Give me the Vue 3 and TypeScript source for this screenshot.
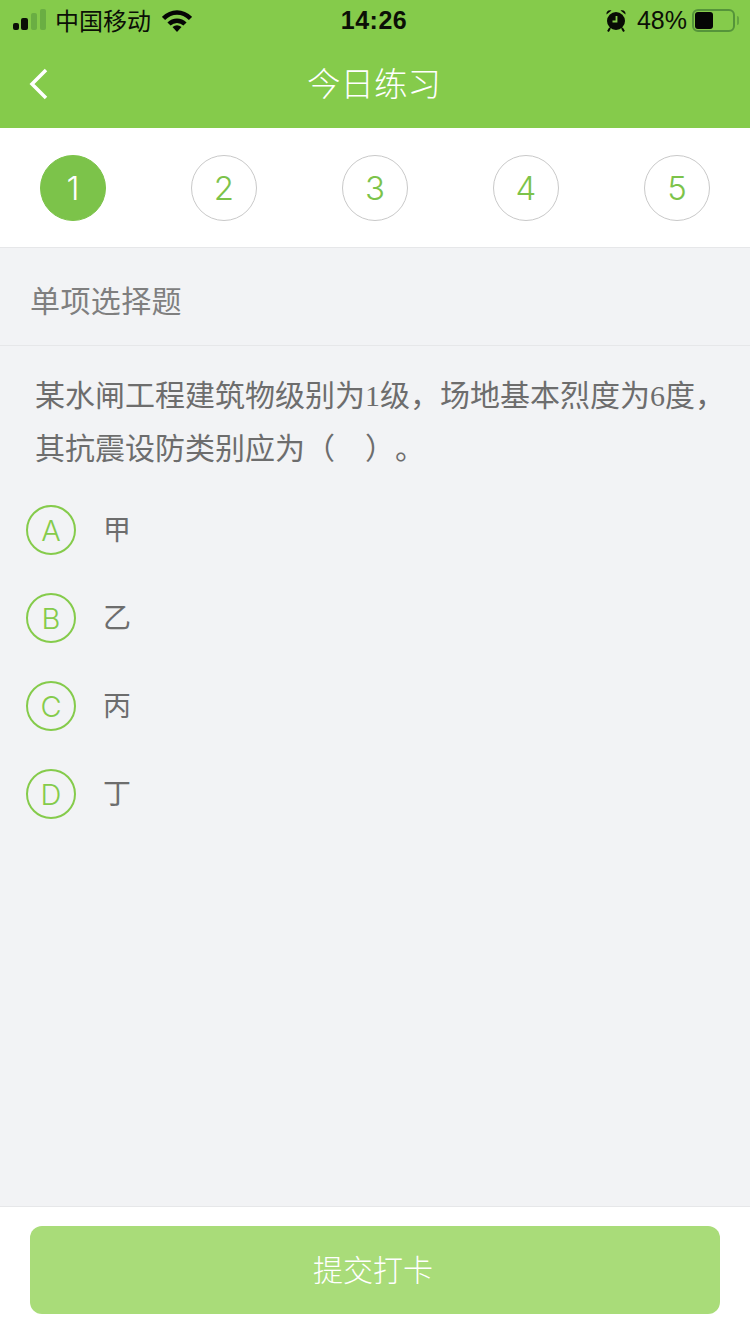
<template>
  <div class="page">
    <header class="top">
      <div class="status">
        <div class="status-left">
          <svg class="signal" width="34" height="32" viewBox="0 0 34 32">
            <rect x="0" y="19" width="6" height="7" rx="2" fill="#0b0f06" />
            <rect x="8" y="14" width="7" height="12" rx="2" fill="#0b0f06" />
            <rect x="18" y="9" width="6" height="17" rx="2" fill="#6aae43" />
            <rect x="27" y="5" width="6" height="21" rx="2" fill="#6aae43" />
          </svg>
          <span class="carrier">中国移动</span>
          <svg class="wifi" width="30" height="22" viewBox="0 0 30 22">
            <path d="M1.500 8.500C9.500 .5 20.500 .5 28.500 8.500" fill="none" stroke="#050505" stroke-width="4.500" />
            <path d="M7 14C11.500 9.500 18.500 9.500 23 14" fill="none" stroke="#050505" stroke-width="4.500" />
            <path d="M10.500 17C13.500 14.800 16.500 14.800 19.500 17L15 22Z" fill="#050505" />
          </svg>
        </div>
        <span class="time">14:26</span>
        <div class="status-right">
          <svg class="alarm" width="22" height="24" viewBox="0 0 22 24">
            <circle cx="11" cy="13" r="9" fill="#080a05" />
            <path d="M1.500 6.500C1 3.500 3.500 1.500 6.500 2.500ZM20.500 6.500C21 3.500 18.500 1.500 15.500 2.500Z" fill="#080a05" />
            <path d="M5 20 3 23.500M17 20 19 23.500" stroke="#080a05" stroke-width="2" />
            <path d="M11.500 8v5.500H7.500" fill="none" stroke="#85cb4b" stroke-width="1.800" />
          </svg>
          <span class="percent">48%</span>
          <div class="battery">
            <div class="battery-fill"></div>
            <div class="battery-tip"></div>
          </div>
        </div>
      </div>
      <div class="nav">
        <svg class="back" width="20" height="32" viewBox="0 0 20 32">
          <path d="M17 2 3 16l14 14" fill="none" stroke="#fff" stroke-width="3.500" />
        </svg>
        <span class="title">今日练习</span>
      </div>
    </header>

    <div class="steps">
      <span v-for="n in steps" :key="n" class="step" :class="{ active: n === current }">{{ n }}</span>
    </div>

    <div class="type">单项选择题</div>

    <main class="body">
      <p class="question">某水闸工程建筑物级别为1级，场地基本烈度为6度，其抗震设防类别应为（　）。</p>
      <ul class="options">
        <li v-for="opt in options" :key="opt.key" class="option">
          <span class="letter">{{ opt.key }}</span>
          <span class="label">{{ opt.text }}</span>
        </li>
      </ul>
    </main>

    <footer class="bottom">
      <button class="submit" type="button">提交打卡</button>
    </footer>
  </div>
</template>

<script setup lang="ts">
const steps: number[] = [1, 2, 3, 4, 5]
const current = 1

const options = [
  { key: 'A', text: '甲' },
  { key: 'B', text: '乙' },
  { key: 'C', text: '丙' },
  { key: 'D', text: '丁' }
]
</script>

<style>
html,
body {
  margin: 0;
  background: #f2f3f5;
}
</style>

<style scoped>
.page {
  width: 750px;
  height: 1334px;
  display: flex;
  flex-direction: column;
  background: #f2f3f5;
  font-family: "Liberation Sans", "Noto Sans CJK SC", sans-serif;
  overflow: hidden;
}

.top {
  height: 128px;
  background: #85cb4b;
}

.status {
  height: 40px;
  display: grid;
  grid-template-columns: 1fr auto 1fr;
  align-items: center;
  padding: 0 13px;
  color: #0b0f06;
}

.status-left,
.status-right {
  display: flex;
  align-items: center;
}

.status-right {
  justify-content: flex-end;
}

.signal {
  margin-right: 8px;
}

.carrier {
  font-size: 24px;
  font-family: "Noto Sans CJK SC", sans-serif;
  margin-top: -2px;
}

.wifi {
  margin: 1px 0 0 11px;
}

.time {
  font-size: 25px;
  font-weight: 700;
  letter-spacing: 0.5px;
  margin-left: -2px;
}

.alarm {
  margin-right: 10px;
}

.percent {
  font-size: 25px;
  margin-right: 5px;
}

.battery {
  position: relative;
  width: 43px;
  height: 23px;
  box-sizing: border-box;
  border: 2px solid #55943a;
  border-radius: 6px;
  padding: 1px;
  margin-right: 2px;
}

.battery-fill {
  width: 18px;
  height: 100%;
  background: #050505;
  border-radius: 3px;
}

.battery-tip {
  position: absolute;
  right: -6px;
  top: 5px;
  width: 2px;
  height: 9px;
  background: #64a63f;
  border-radius: 0 2px 2px 0;
}

.nav {
  position: relative;
  height: 88px;
  display: flex;
  align-items: center;
  justify-content: center;
}

.back {
  position: absolute;
  left: 29px;
  top: 28px;
}

.title {
  color: #fff;
  font-size: 33.500px;
  font-weight: 300;
  font-family: "Noto Sans CJK SC", sans-serif;
  margin: -5px 2px 0 0;
}

.steps {
  box-sizing: border-box;
  padding: 27px 40px 0;
  display: flex;
  justify-content: space-between;
  background: #fff;
  border-bottom: 1px solid #e6e7e9;
  height: 120px;
}

.step {
  width: 66px;
  height: 66px;
  box-sizing: border-box;
  border: 1px solid #c9c9c9;
  border-radius: 50%;
  display: flex;
  align-items: center;
  justify-content: center;
  color: #7cc34a;
  font-size: 33px;
  font-weight: 300;
  font-family: Inter, "Liberation Sans", sans-serif;
}

.step.active {
  background: #7cc34a;
  border-color: #7cc34a;
  color: #fff;
}

.type {
  height: 98px;
  box-sizing: border-box;
  padding: 5px 30px 0;
  display: flex;
  align-items: center;
  border-bottom: 1px solid #e6e7e9;
  color: #7f7f7f;
  font-size: 30px;
  letter-spacing: 0.4px;
  font-family: "Noto Sans CJK SC", sans-serif;
}

.body {
  flex: 1;
  padding: 23px 20px 0 26px;
}

.question {
  margin: 0 0 0 9px;
  color: #6d6d6d;
  font-size: 30px;
  line-height: 53px;
  text-spacing-trim: space-all;
  font-family: "Liberation Serif", "Noto Sans CJK SC", serif;
}

.options {
  list-style: none;
  margin: 30px 0 0;
  padding: 0;
  display: flex;
  flex-direction: column;
  gap: 38px;
}

.option {
  display: flex;
  align-items: center;
  height: 50px;
}

.letter {
  width: 50px;
  height: 50px;
  box-sizing: border-box;
  border: 2px solid #85cb4b;
  border-radius: 50%;
  display: flex;
  align-items: center;
  justify-content: center;
  color: #85cb4b;
  font-size: 29px;
  font-weight: 300;
  font-family: Inter, "Liberation Sans", sans-serif;
}

.label {
  margin: -5px 0 0 27px;
  color: #6d6d6d;
  font-size: 28px;
  font-family: "Noto Sans CJK SC", sans-serif;
}

.bottom {
  height: 128px;
  box-sizing: border-box;
  padding: 19px 30px 0;
  background: #fff;
  border-top: 1px solid #e6e7e9;
}

.submit {
  display: block;
  width: 100%;
  height: 88px;
  border: 0;
  border-radius: 12px;
  padding: 0 4px 4px 0;
  background: #a9dc79;
  color: #fff;
  font-size: 30px;
  font-weight: 300;
  font-family: "Noto Sans CJK SC", sans-serif;
}
</style>
